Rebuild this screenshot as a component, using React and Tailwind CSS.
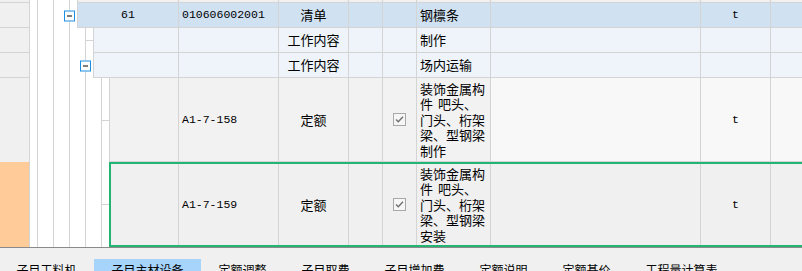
import React from "react";

const CJK = "font-['Noto_Sans_CJK_SC','Noto_Sans',sans-serif]";
const MONO = "font-['Liberation_Mono',monospace]";
const LINE = "border-[#d4d4d4]";

function Btn() {
  return (
    <div className="absolute left-[-6px] top-1/2 -translate-y-1/2 w-[11px] h-[11px] border border-[#1a8fe3] bg-white flex items-center justify-center">
      <div className="w-[5px] h-px bg-black" />
    </div>
  );
}

function Tree({ slots, node }) {
  return (
    <div className="flex shrink-0 bg-white">
      <div className="w-[7px]" />
      {Array.from({ length: slots }).map((_, i) => (
        <div key={i} className={`w-[16px] border-l ${LINE}`} />
      ))}
      <div className={`relative w-[8px] border-l ${LINE} flex items-center`}>
        {node === "stub" && <div className="h-px w-full bg-[#d4d4d4]" />}
        {node === "btn" && <Btn />}
      </div>
    </div>
  );
}

function Check() {
  return (
    <svg width="13" height="13" viewBox="0 0 13 13">
      <rect x="0.5" y="0.5" width="12" height="12" fill="#f6f6f6" stroke="#a8a8a8" />
      <polyline points="3,6.5 5.3,8.8 10,3.8" fill="none" stroke="#707070" strokeWidth="1.4" />
    </svg>
  );
}

function Cells({ c, bgA, bgB = bgA, frame }) {
  const cell = `border-r ${LINE} flex items-center`;
  return (
    <div
      className={`flex flex-1 min-w-0 ${
        frame
          ? "border-t-2 border-b-2 border-l-2 border-[#22b573]"
          : `border-b border-l ${LINE}`
      }`}
    >
      <div className={`flex-1 min-w-0 ${cell} justify-center ${bgA} ${MONO} text-[11.5px]`}>{c[0]}</div>
      <div className={`w-[100px] ${cell} pl-[3px] ${bgA} ${MONO} text-[11.5px]`}>{c[1]}</div>
      <div className={`w-[70px] ${cell} justify-center ${bgA} ${CJK} text-[13px]`}>{c[2]}</div>
      <div className={`w-[34px] ${cell} ${bgA}`} />
      <div className={`w-[34px] ${cell} justify-center ${bgA}`}>{c[4]}</div>
      <div className={`w-[74px] ${cell} pl-[3px] ${bgA} ${CJK} text-[13px]`}>{c[5]}</div>
      <div className={`w-[210px] ${cell} ${bgB}`} />
      <div className={`w-[70px] ${cell} justify-center ${bgB} ${MONO} text-[11.5px]`}>{c[7]}</div>
      <div className={`w-[31px] ${bgB}`} />
    </div>
  );
}

function Desc({ last }) {
  return (
    <div className="leading-[15.6px] whitespace-nowrap">
      <div>装饰金属构</div>
      <div>
        件<span className="inline-block w-[5px]" />吧头、
      </div>
      <div>门头、桁架</div>
      <div>梁、型钢梁</div>
      <div>{last}</div>
    </div>
  );
}

function Row({ h, left, slots, node, children }) {
  return (
    <div className={`flex shrink-0 ${h}`}>
      {left}
      <Tree slots={slots} node={node} />
      {children}
    </div>
  );
}

const leftGrey = <div className={`w-[30px] shrink-0 bg-[#f0f0f0] border-r border-b ${LINE}`} />;
const leftGreyNoB = <div className={`w-[30px] shrink-0 bg-[#f0f0f0] border-r ${LINE}`} />;
const leftOrange = <div className={`w-[30px] shrink-0 bg-[#ffcc99] border-r ${LINE}`} />;

export default function App() {
  const e = ["", "", "", "", "", "", "", ""];
  return (
    <div className="w-[802px] h-[271px] overflow-hidden bg-white text-black flex flex-col">
      <Row h="h-[3px]" left={leftGrey} slots={2} node={null}>
        <Cells c={e} bgA="bg-[#f0f0f0]" />
      </Row>
      <Row h="h-[25px]" left={leftGrey} slots={2} node="btn">
        <Cells
          c={["61", "010606002001", "清单", "", null, "钢檩条", "", "t"]}
          bgA="bg-[#d0e1f2]"
        />
      </Row>
      <Row h="h-[25px]" left={leftGrey} slots={3} node="stub">
        <Cells c={["", "", "工作内容", "", null, "制作", "", ""]} bgA="bg-[#eef4f9]" />
      </Row>
      <Row h="h-[25px]" left={leftGrey} slots={3} node="btn">
        <Cells c={["", "", "工作内容", "", null, "场内运输", "", ""]} bgA="bg-[#eef4f9]" />
      </Row>
      <Row h="h-[84px]" left={leftGreyNoB} slots={4} node="stub">
        <Cells
          c={["", "A1-7-158", "定额", "", <Check />, <Desc last="制作" />, "", "t"]}
          bgA="bg-[#f2f2f2]"
          bgB="bg-[#f8f8f8]"
        />
      </Row>
      <Row h="h-[85px]" left={leftOrange} slots={4} node="stub">
        <Cells
          c={["", "A1-7-159", "定额", "", <Check />, <Desc last="安装" />, "", "t"]}
          bgA="bg-[#f0f0f0]"
          frame
        />
      </Row>
      <div className="h-px bg-[#8a8a8a] shrink-0" />
      <div className={`flex-1 bg-[#f0f0f0] flex items-start pt-[11px] ${CJK} text-[12px]`}>
        <div className="ml-[-1px] flex">
          <div className="px-[17.5px] leading-[22px] h-[24px]">子目工料机</div>
          <div className="px-[17.5px] leading-[22px] h-[24px] bg-[#a6d4fa]">子目主材设备</div>
          <div className="px-[17.5px] leading-[22px] h-[24px]">定额调整</div>
          <div className="px-[17.5px] leading-[22px] h-[24px]">子目取费</div>
          <div className="px-[17.5px] leading-[22px] h-[24px]">子目增加费</div>
          <div className="px-[17.5px] leading-[22px] h-[24px]">定额说明</div>
          <div className="px-[17.5px] leading-[22px] h-[24px]">定额基价</div>
          <div className="px-[17.5px] leading-[22px] h-[24px]">工程量计算表</div>
        </div>
      </div>
    </div>
  );
}
